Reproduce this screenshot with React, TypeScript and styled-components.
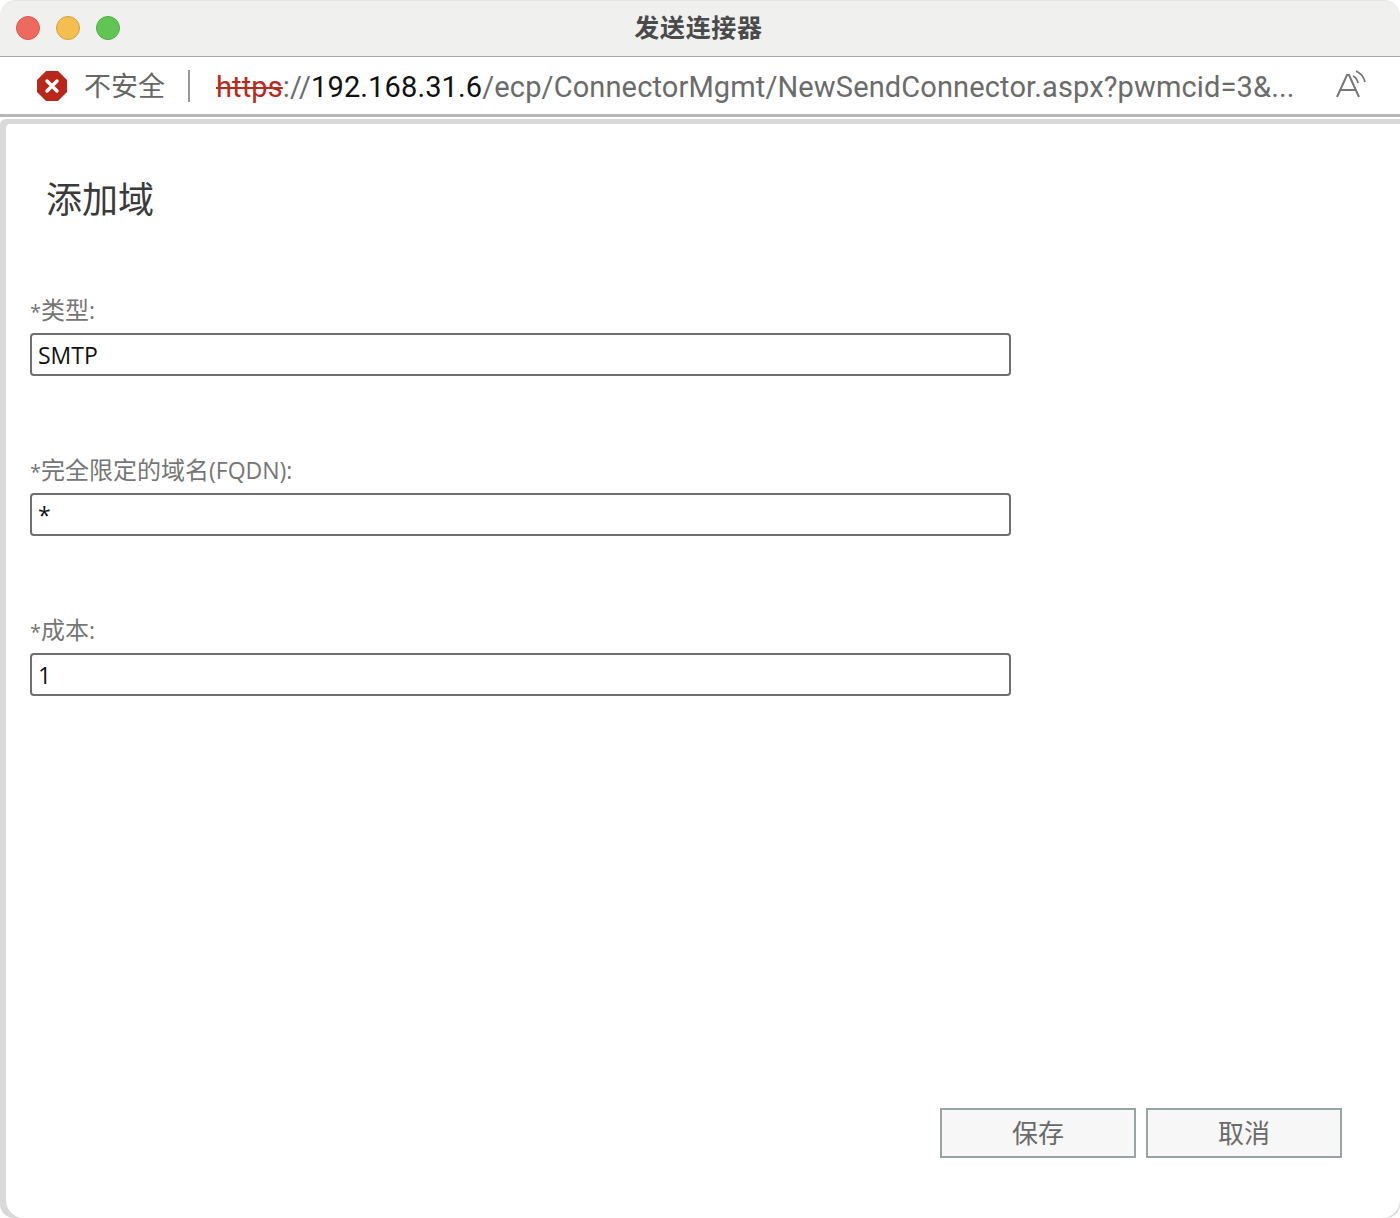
import React from "react";
import styled, { createGlobalStyle } from "styled-components";

const Global = createGlobalStyle`
  html, body { margin: 0; padding: 0; background: #fff; }
  body { font-family: "Liberation Sans", "Noto Sans CJK SC", sans-serif; }
`;

const Window = styled.div`
  width: 1400px;
  height: 1218px;
  display: flex;
  flex-direction: column;
  overflow: hidden;
  border-radius: 14px;
  background: #fff;
`;

const TitleBar = styled.div`
  height: 55px;
  flex: none;
  position: relative;
  background: #f0f0ef;
  border-top: 1px solid #e4e4e4;
  border-bottom: 1px solid #a8a8a8;
  border-radius: 16px 16px 0 0;
  display: flex;
  align-items: center;
  justify-content: center;
`;

const Lights = styled.div`
  position: absolute;
  left: 16px;
  top: 15px;
  display: flex;
  gap: 16px;
`;

const Light = styled.span<{ $bg: string; $line: string }>`
  width: 24px;
  height: 24px;
  box-sizing: border-box;
  border-radius: 50%;
  background: ${(p) => p.$bg};
  border: 1px solid ${(p) => p.$line};
`;

const Title = styled.div`
  font-family: "Noto Sans CJK SC", sans-serif;
  font-size: 25px;
  font-weight: 700;
  color: #4a4a4a;
  letter-spacing: 0.7px;
  line-height: 51px;
  height: 55px;
  margin-left: -3px;
`;

const AddressBar = styled.div`
  height: 57px;
  flex: none;
  display: flex;
  align-items: center;
  background: #fff;
  padding-left: 37px;
  position: relative;
`;

const InsecureText = styled.span`
  font-family: "Noto Sans CJK SC", sans-serif;
  font-size: 27px;
  color: #666;
  margin-left: 17px;
  line-height: 55px;
  height: 57px;
`;

const Divider = styled.span`
  width: 2px;
  height: 32px;
  background: #999;
  margin: 0 26px 0 23px;
`;

const Url = styled.div`
  font-family: Roboto, sans-serif;
  font-size: 29px;
  letter-spacing: 0.13px;
  color: #6b6b6b;
  white-space: nowrap;
  line-height: 57px;
  height: 57px;
  padding-top: 2px;
  box-sizing: border-box;
`;

const Scheme = styled.span`
  color: #b9291c;
  text-decoration: line-through;
  text-decoration-thickness: 2px;
`;

const Host = styled.span`
  color: #111;
`;

const ReadAloud = styled.svg`
  position: absolute;
  left: 1335px;
  top: 12px;
`;

const Rule = styled.div`
  height: 3px;
  flex: none;
  background: #b8b8b8;
`;

const Gap = styled.div`
  height: 2px;
  flex: none;
  background: #fff;
`;

const Frame = styled.div`
  flex: 1;
  background: #d9d9d9;
  padding: 5px 0 0 6px;
  display: flex;
  min-height: 0;
  border-radius: 6px 0 0 0;
`;

const Dialog = styled.div`
  flex: 1;
  background: #fff;
  display: flex;
  flex-direction: column;
  padding: 0 58px 60px 24px;
  border-radius: 4px 0 18px 18px;
`;

const Heading = styled.h1`
  font-family: "Noto Sans CJK SC", sans-serif;
  font-weight: 400;
  font-size: 36px;
  line-height: 50px;
  color: #3a3a3a;
  margin: 48px 0 0 16px;
`;

const Form = styled.div`
  margin-top: 70px;
  display: flex;
  flex-direction: column;
  gap: 76px;
  flex: 1;
`;

const Field = styled.div`
  width: 981px;
  display: flex;
  flex-direction: column;
`;

const Label = styled.label`
  font-family: "Noto Sans CJK SC", sans-serif;
  font-size: 24px;
  line-height: 33px;
  height: 41px;
  color: #767676;
`;

const Latin = styled.span<{ $size: number }>`
  font-family: "Open Sans", sans-serif;
  font-size: ${(p) => p.$size}px;
`;

const ValueBox = styled.div`
  height: 43px;
  box-sizing: border-box;
  border: 2px solid #707070;
  border-radius: 4px;
  background: #fff;
  font-family: "Open Sans", sans-serif;
  font-size: 23px;
  line-height: 40px;
  padding-left: 6px;
  color: #111;
`;

const Actions = styled.div`
  display: flex;
  justify-content: flex-end;
  gap: 10px;
`;

const ActionButton = styled.button`
  width: 196px;
  height: 50px;
  box-sizing: border-box;
  border: 2px solid #97a3a5;
  background: #f7f7f7;
  color: #6a6a6a;
  font-family: "Noto Sans CJK SC", sans-serif;
  font-size: 26px;
  padding: 0 0 4px;
`;

export default function App() {
  return (
    <>
      <Global />
      <Window>
        <TitleBar>
          <Lights>
            <Light $bg="#ee6a5f" $line="#d8564c" />
            <Light $bg="#f5bf4f" $line="#d9a13c" />
            <Light $bg="#61c554" $line="#4fae44" />
          </Lights>
          <Title>发送连接器</Title>
        </TitleBar>
        <AddressBar>
          <svg width="30" height="30" viewBox="0 0 30 30">
            <polygon points="9,0 21,0 30,9 30,21 21,30 9,30 0,21 0,9" fill="#b9271a" />
            <path d="M10 10 L20 20 M20 10 L10 20" stroke="#fff" strokeWidth="3.4" strokeLinecap="round" />
          </svg>
          <InsecureText>不安全</InsecureText>
          <Divider />
          <Url>
            <Scheme>https</Scheme>://<Host>192.168.31.6</Host>/ecp/ConnectorMgmt/NewSendConnector.aspx?pwmcid=3&amp;...
          </Url>
          <ReadAloud width="34" height="34" viewBox="0 0 34 34" fill="none" stroke="#777" strokeWidth="2">
            <path d="M2 28 L12 6 L14 6 L24 28 M5.5 21 H20.5" />
            <path d="M18 7 Q22 9 23 14" strokeWidth="1.8" />
            <path d="M21 2 Q28 5 30 13" strokeWidth="1.8" />
          </ReadAloud>
        </AddressBar>
        <Rule />
        <Gap />
        <Frame>
          <Dialog>
            <Heading>添加域</Heading>
            <Form>
              <Field>
                <Label><Latin $size={20}>*</Latin>类型<Latin $size={23}>:</Latin></Label>
                <ValueBox>SMTP</ValueBox>
              </Field>
              <Field>
                <Label><Latin $size={20}>*</Latin>完全限定的域名<Latin $size={23}>(FQDN):</Latin></Label>
                <ValueBox>*</ValueBox>
              </Field>
              <Field>
                <Label><Latin $size={20}>*</Latin>成本<Latin $size={23}>:</Latin></Label>
                <ValueBox>1</ValueBox>
              </Field>
            </Form>
            <Actions>
              <ActionButton>保存</ActionButton>
              <ActionButton>取消</ActionButton>
            </Actions>
          </Dialog>
        </Frame>
      </Window>
    </>
  );
}
